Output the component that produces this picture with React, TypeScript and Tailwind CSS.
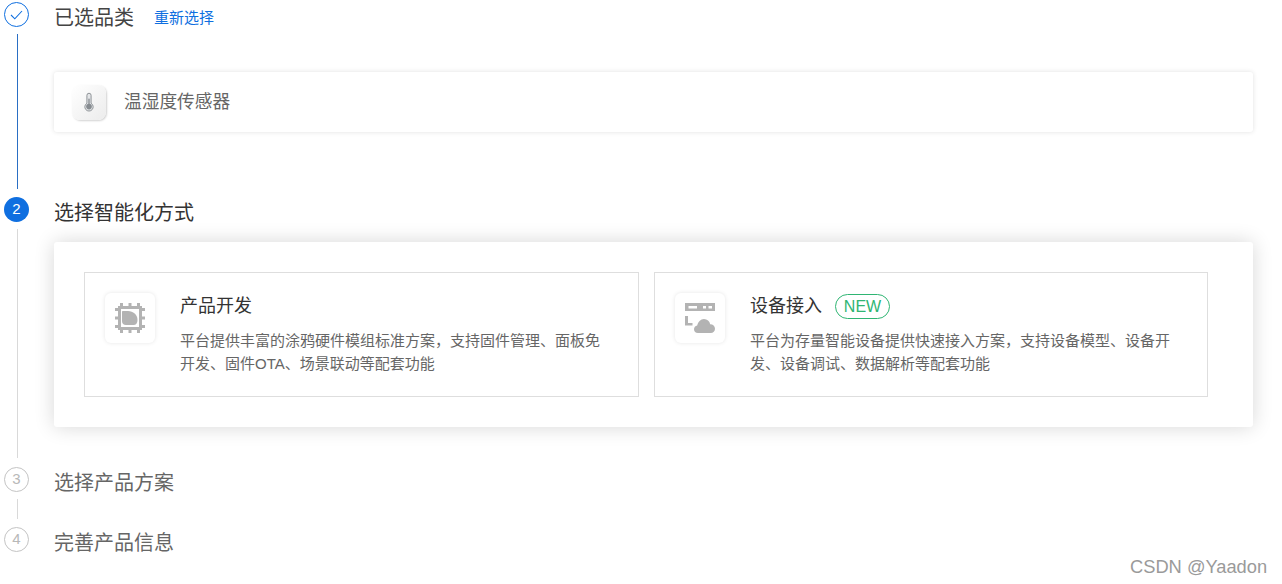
import React from 'react';

const font = "font-['Liberation_Sans','Noto_Sans_CJK_SC',sans-serif]";

const ChipIcon = () => (
  <svg width="30" height="30" viewBox="0 0 30 30" fill="#b3b3b3">
    <path fillRule="evenodd" d="M3 3h24v24H3zM6 6v18h18V6z" />
    <path d="M5 0h3v3H5zM13.500 0h3v3h-3zM22 0h3v3h-3zM5 27h3v3H5zM13.500 27h3v3h-3zM22 27h3v3h-3zM0 5h3v3H0zM0 13.500h3v3H0zM0 22h3v3H0zM27 5h3v3h-3zM27 13.500h3v3h-3zM27 22h3v3h-3z" />
    <path d="M8 8h5c5 0 9.500 3.500 9.500 9 0 3-1.500 5-4 5H11c-2.500 0-4-1.500-4-4V9c0-.6.4-1 1-1z" />
  </svg>
);

const DeviceIcon = () => (
  <svg width="30" height="30" viewBox="0 0 30 30" fill="#b3b3b3">
    <path fillRule="evenodd" d="M0 0h30v8H0zM3.500 3v2.500H12V3zM18 3v2.500h3V3zM23.500 3v2.500H27V3z" />
    <path d="M0 13h3v7h4.500v2.500H0z" />
    <path d="M13 30c-2.500 0-4-1.800-4-3.800 0-2 1.300-3.500 3.200-3.800C13 19 15.500 16 19 16c3.200 0 5.500 2.200 6.200 5.200 2.800 0 4.800 2 4.800 4.500 0 2.400-1.800 4.300-4.200 4.300z" />
  </svg>
);

const ThermometerIcon = () => (
  <svg width="10" height="20" viewBox="0 0 12 22">
    <path d="M3.500 3a2.500 2.500 0 0 1 5 0v9.500a5 5 0 1 1-5 0z" fill="#e4e6e8" stroke="#8f9498" strokeWidth="1.200" />
    <rect x="5.200" y="7" width="1.600" height="8" fill="#868b90" />
    <circle cx="6" cy="16.500" r="3.400" fill="#868b90" />
  </svg>
);

const StepMark = ({ state, label }: { state: 'done' | 'active' | 'todo'; label?: string }) => {
  if (state === 'done') {
    return (
      <div className="flex h-[25px] w-[25px] shrink-0 items-center justify-center rounded-full border border-[#0f6fe0]">
        <svg width="13" height="10" viewBox="0 0 13 10" fill="none" stroke="#0f6fe0" strokeWidth="1.100">
          <path d="M1 5l3.800 3.800L12 1" />
        </svg>
      </div>
    );
  }
  if (state === 'active') {
    return (
      <div className="flex h-[25px] w-[25px] shrink-0 items-center justify-center rounded-full bg-[#0f6fe0] text-[15px] text-white">
        {label}
      </div>
    );
  }
  return (
    <div className="flex h-[25px] w-[25px] shrink-0 items-center justify-center rounded-full border border-[#c4c4c4] text-[15px] text-[#b8b8b8]">
      {label}
    </div>
  );
};

const OptionCard = ({
  icon,
  title,
  badge,
  lines,
  widthClass,
}: {
  icon: React.ReactNode;
  title: string;
  badge?: string;
  lines: string[];
  widthClass: string;
}) => (
  <div className={`flex h-[125px] items-start border border-[#dedede] p-5 ${widthClass}`}>
    <div className="flex h-[50px] w-[50px] shrink-0 items-center justify-center rounded-md bg-white shadow-[0_0_4px_rgba(0,0,0,0.1)]">
      {icon}
    </div>
    <div className="ml-[25px]">
      <div className="flex h-[26px] items-center pt-[1px]">
        <span className="text-[18px] text-[#333333]">{title}</span>
        {badge && (
          <span className="ml-[13px] flex h-[25px] w-[55px] items-center justify-center rounded-full border border-[#2fb573] text-[16px] text-[#2fb573]">
            {badge}
          </span>
        )}
      </div>
      <div className="mt-[10px] text-[15px] leading-[23px] text-[#666666]">
        {lines.map((line) => (
          <div key={line}>{line}</div>
        ))}
      </div>
    </div>
  </div>
);

export default function App() {
  return (
    <div className={`relative h-[584px] overflow-hidden bg-white pt-[2px] pl-1 ${font}`}>
      {/* step 1 */}
      <div className="flex h-[195px]">
        <div className="mr-[25px] flex w-[25px] flex-col items-center">
          <StepMark state="done" />
          <div className="mt-[7px] mb-2 ml-px w-px flex-1 bg-[#2a6fc4]" />
        </div>
        <div className="flex-1 pr-[29px]">
          <div className="flex h-[30px] items-center pt-[2px]">
            <span className="text-[20px] text-[#444444]">已选品类</span>
            <span className="ml-5 pt-px text-[15px] text-[#0f6fe0]">重新选择</span>
          </div>
          <div className="mt-10 flex h-[60px] items-center rounded-[3px] bg-white pl-[18px] shadow-[0_0_5px_rgba(0,0,0,0.12)]">
            <div className="flex h-[35px] w-[34px] items-center justify-center rounded-lg bg-gradient-to-br from-white to-[#ececec] shadow-[1px_1px_2px_rgba(0,0,0,0.18)]">
              <ThermometerIcon />
            </div>
            <span className="ml-[18px] text-[17.700px] text-[#666666]">温湿度传感器</span>
          </div>
        </div>
      </div>

      {/* step 2 */}
      <div className="flex h-[270px]">
        <div className="mr-[25px] flex w-[25px] flex-col items-center">
          <StepMark state="active" label="2" />
          <div className="mt-[7px] mb-[9px] ml-px w-px flex-1 bg-[#d9d9d9]" />
        </div>
        <div className="flex-1 pr-[29px]">
          <div className="flex h-[30px] items-center pt-[2px]">
            <span className="text-[20px] text-[#333333]">选择智能化方式</span>
          </div>
          <div className="mt-[15px] flex h-[185px] gap-[15px] rounded-[3px] bg-white p-[30px] shadow-[0_0_20px_rgba(0,0,0,0.16)]">
            <OptionCard
              icon={<ChipIcon />}
              title="产品开发"
              widthClass="w-[555px]"
              lines={['平台提供丰富的涂鸦硬件模组标准方案，支持固件管理、面板免', '开发、固件OTA、场景联动等配套功能']}
            />
            <OptionCard
              icon={<DeviceIcon />}
              title="设备接入"
              badge="NEW"
              widthClass="w-[554px]"
              lines={['平台为存量智能设备提供快速接入方案，支持设备模型、设备开', '发、设备调试、数据解析等配套功能']}
            />
          </div>
        </div>
      </div>

      {/* step 3 */}
      <div className="flex h-[60px]">
        <div className="mr-[25px] flex w-[25px] flex-col items-center">
          <StepMark state="todo" label="3" />
          <div className="mt-[7px] mb-2 ml-px w-px flex-1 bg-[#d9d9d9]" />
        </div>
        <div className="flex h-[30px] items-center pt-[2px] text-[20px] text-[#666666]">选择产品方案</div>
      </div>

      {/* step 4 */}
      <div className="flex">
        <div className="mr-[25px] flex w-[25px] flex-col items-center">
          <StepMark state="todo" label="4" />
        </div>
        <div className="flex h-[30px] items-center pt-[2px] text-[20px] text-[#666666]">完善产品信息</div>
      </div>

      <div className="absolute top-[555px] left-[1130px] text-[18.300px] leading-6 text-[#9a9a9a]">CSDN @Yaadon</div>
    </div>
  );
}
